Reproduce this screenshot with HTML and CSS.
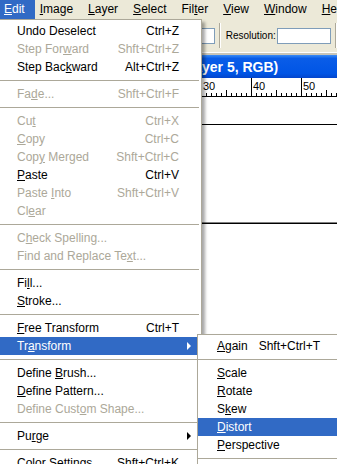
FILE: index.html
```html
<!DOCTYPE html>
<html lang="en">
<head>
    <meta charset="UTF-8">
    <title>Edit Menu</title>
    <link rel="stylesheet" href="styles.css">
</head>
<body>
    <div class="app">
        <div class="menubar">
            <span class="bar-item bar-item-edit active"><u>E</u>dit</span>
            <span class="bar-item bar-item-image"><u>I</u>mage</span>
            <span class="bar-item"><u>L</u>ayer</span>
            <span class="bar-item"><u>S</u>elect</span>
            <span class="bar-item">Fil<u>t</u>er</span>
            <span class="bar-item"><u>V</u>iew</span>
            <span class="bar-item"><u>W</u>indow</span>
            <span class="bar-item"><u>H</u>elp</span>
        </div>

        <div class="options">
            <span class="field field-small"></span>
            <span class="divider"></span>
            <span class="options-label">Resolution:</span>
            <span class="field field-wide"></span>
            <span class="divider"></span>
        </div>

        <div class="doc">
            <div class="doc-title"><span class="doc-title-head">Untitled-1 @ 66.7% (La</span>yer 5, RGB)</div>
            <div class="ruler">
                <span class="ruler-cell">0</span>
                <span class="ruler-cell">10</span>
                <span class="ruler-cell">20</span>
                <span class="ruler-cell">30</span>
                <span class="ruler-cell">40</span>
                <span class="ruler-cell">50</span>
            </div>
            <div class="canvas">
                <div class="edge edge-top"></div>
                <div class="edge edge-bottom"></div>
            </div>
        </div>

        <!-- Edit dropdown -->
        <div class="menu edit-menu">
            <div class="item"><span>Undo Deselect</span><span class="key">Ctrl+Z</span></div>
            <div class="item off"><span>Step For<u>w</u>ard</span><span class="key">Shft+Ctrl+Z</span></div>
            <div class="item"><span>Step Bac<u>k</u>ward</span><span class="key">Alt+Ctrl+Z</span></div>
            <div class="sep"></div>
            <div class="item off"><span>Fa<u>d</u>e...</span><span class="key">Shft+Ctrl+F</span></div>
            <div class="sep"></div>
            <div class="item off"><span>Cu<u>t</u></span><span class="key">Ctrl+X</span></div>
            <div class="item off"><span><u>C</u>opy</span><span class="key">Ctrl+C</span></div>
            <div class="item off"><span>Cop<u>y</u> Merged</span><span class="key">Shft+Ctrl+C</span></div>
            <div class="item"><span><u>P</u>aste</span><span class="key">Ctrl+V</span></div>
            <div class="item off"><span>Paste <u>I</u>nto</span><span class="key">Shft+Ctrl+V</span></div>
            <div class="item off"><span>Cl<u>e</u>ar</span></div>
            <div class="sep"></div>
            <div class="item off"><span>C<u>h</u>eck Spelling...</span></div>
            <div class="item off"><span>Find and Replace Te<u>x</u>t...</span></div>
            <div class="sep"></div>
            <div class="item"><span>Fi<u>l</u>l...</span></div>
            <div class="item"><span><u>S</u>troke...</span></div>
            <div class="sep"></div>
            <div class="item"><span><u>F</u>ree Transform</span><span class="key">Ctrl+T</span></div>
            <div class="item active"><span>Tr<u>a</u>nsform</span><span class="arrow"></span></div>
            <div class="sep"></div>
            <div class="item"><span>Define <u>B</u>rush...</span></div>
            <div class="item"><span><u>D</u>efine Pattern...</span></div>
            <div class="item off"><span>Define Cust<u>o</u>m Shape...</span></div>
            <div class="sep"></div>
            <div class="item"><span>Pu<u>r</u>ge</span><span class="arrow"></span></div>
            <div class="sep"></div>
            <div class="item"><span>Color Settings</span><span class="key">Shft+Ctrl+K</span></div>
        </div>

        <!-- Transform submenu -->
        <div class="menu submenu">
            <div class="item"><span><u>A</u>gain</span><span class="key">Shft+Ctrl+T</span></div>
            <div class="sep"></div>
            <div class="item"><span><u>S</u>cale</span></div>
            <div class="item"><span><u>R</u>otate</span></div>
            <div class="item"><span>S<u>k</u>ew</span></div>
            <div class="item active"><span><u>D</u>istort</span></div>
            <div class="item"><span><u>P</u>erspective</span></div>
            <div class="sep"></div>
            <div class="item"><span>Rotate <u>1</u>80&deg;</span></div>
        </div>
    </div>
</body>
</html>
```

FILE: styles.css
```css
body {
    margin: 0;
    font-family: 'Liberation Sans', Arial, sans-serif;
    font-size: 12px;
    color: #000;
    background: #ece9d8;
}
.app {
    position: relative;
    width: 337px;
    height: 464px;
    overflow: hidden;
    display: flex;
    flex-direction: column;
}
u { text-underline-offset: 1px; }

/* menu bar */
.menubar {
    display: flex;
    height: 19px;
    line-height: 19px;
    margin-left: -3.5px;
    white-space: nowrap;
}
.bar-item { padding: 0 7.5px; }
.bar-item-edit { padding: 0 10.5px 0 7.5px; }
.bar-item-image { padding-left: 4.5px; }
.bar-item.active {
    background: #316ac5;
    color: #fff;
}

/* options bar */
.options {
    display: flex;
    align-items: center;
    height: 33px;
    border-bottom: 1px solid #fff;
}
.field {
    height: 14px;
    background: #fff;
    border: 1px solid #7f9db9;
}
.field-small { width: 37px; margin-left: 176px; }
.field-wide { width: 52px; }
.divider {
    width: 1px;
    height: 25px;
    margin-left: 4px;
    background: #aca899;
    border-right: 1px solid #fff;
}
.options-label {
    width: 52px;
    margin-left: 5px;
    font-size: 10px;
}

/* document window */
.doc {
    flex: 1;
    display: flex;
    flex-direction: column;
    border-top: 2px solid #c8c5b8;
}
.doc-title {
    height: 23px;
    line-height: 25px;
    white-space: nowrap;
    color: #fff;
    font-weight: bold;
    font-size: 14px;
    background: linear-gradient(#3b8cf5, #0a5de8 15%, #0055e5 80%, #0345cc);
}
.doc-title-head {
    display: inline-block;
    width: 202px;
    text-align: right;
}
.ruler {
    display: flex;
    height: 18px;
    padding-left: 51px;
    background: #fff;
    border-bottom: 1px solid #000;
}
.ruler-cell {
    flex: 0 0 50px;
    border-left: 1px solid #000;
    padding-left: 1px;
    font-size: 11px;
    line-height: 12px;
    padding-top: 2px;
    box-sizing: border-box;
    background:
        linear-gradient(#000, #000) 24px 100% / 1px 6px no-repeat,
        repeating-linear-gradient(to right, #000 0 1px, transparent 1px 5px) 4px 100% / 100% 3px no-repeat;
}
.canvas {
    flex: 1;
    background: #fff;
}
.edge { height: 1px; background: #000; }
.edge-top { margin-top: 27px; }
.edge-bottom {
    margin-top: 97px;
    border-top: 1px solid #808080;
}

/* dropdown menus */
.menu {
    position: absolute;
    background: #fff;
    border: 1px solid #aca899;
    padding: 2px 0;
    box-shadow: 3px 3px 3px rgba(0, 0, 0, 0.35);
    white-space: nowrap;
}
.edit-menu {
    top: 19px;
    left: -1px;
    width: 201px;
}
.submenu {
    top: 334px;
    left: 197px;
    width: 144px;
}
.item {
    display: flex;
    height: 18px;
    line-height: 18px;
    padding: 0 22px 0 17px;
}
.submenu .item { padding-left: 19px; }
.item.off { color: #aca899; }
.item.active {
    background: #316ac5;
    color: #fff;
}
.key { margin-left: auto; }
.arrow {
    margin: 5px -12px 0 auto;
    width: 0;
    height: 0;
    border-left: 4px solid #000;
    border-top: 4px solid transparent;
    border-bottom: 4px solid transparent;
}
.item.active .arrow { border-left-color: #fff; }
.sep {
    height: 9px;
    display: flex;
    align-items: center;
    margin-right: 2px;
}
.sep::after {
    content: "";
    flex: 1;
    height: 1px;
    background: #aca899;
}
```
